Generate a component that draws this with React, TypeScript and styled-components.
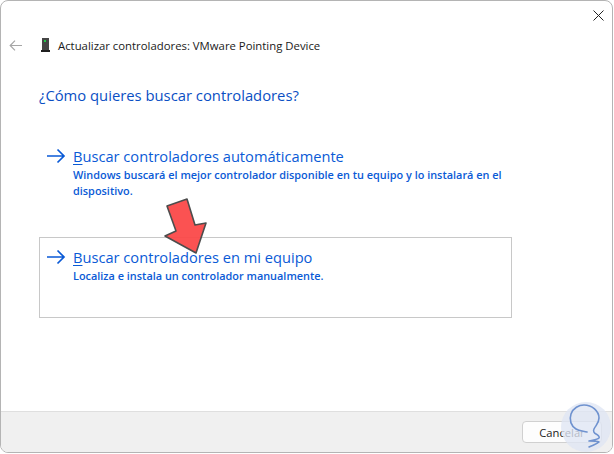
import styled, { createGlobalStyle } from 'styled-components';

const GlobalStyle = createGlobalStyle`
  html, body {
    margin: 0;
    padding: 0;
    background: #fff;
  }
  body {
    width: 614px;
    height: 454px;
    overflow: hidden;
    font-family: 'Open Sans', 'Noto Sans', sans-serif;
  }
`;

const Frame = styled.div`
  position: relative;
  width: 614px;
  height: 454px;
  overflow: hidden;
  background: #fff;
`;

const Dialog = styled.div`
  width: 613px;
  height: 453px;
  box-sizing: border-box;
  display: flex;
  flex-direction: column;
  border: 1px solid #b4b4b4;
  border-radius: 8px;
  overflow: hidden;
  background: #fff;
`;

const TitleBar = styled.div`
  height: 29px;
  display: flex;
  justify-content: flex-end;
  align-items: center;
  padding: 0 8px 0 0;
  box-sizing: border-box;
  flex: none;
`;

const Content = styled.div`
  flex: 1;
  display: flex;
  flex-direction: column;
  padding: 0 0 0 8px;
`;

const Header = styled.div`
  height: 30px;
  display: flex;
  align-items: center;
`;

const BackButton = styled.svg`
  flex: none;
  width: 13px;
  height: 11px;
`;

const DeviceGlyph = styled.svg`
  flex: none;
  width: 9px;
  height: 14px;
  margin-left: 19px;
`;

const HeaderTitle = styled.span`
  margin-left: 8px;
  font-size: 11.35px;
  color: #1a1a1a;
  white-space: nowrap;
`;

const Heading = styled.h1`
  margin: 25px 0 0 30px;
  font-size: 14.8px;
  line-height: 21px;
  font-weight: 400;
  color: #0a4fc4;
`;

const Options = styled.div`
  margin: 30px 0 0 30px;
  display: flex;
  flex-direction: column;
  gap: 38px;
`;

const Option = styled.div<{ $outlined?: boolean }>`
  width: 473px;
  height: ${(p) => (p.$outlined ? '81px' : '63px')};
  box-sizing: border-box;
  display: flex;
  align-items: flex-start;
  gap: 7px;
  padding: 9px 6px 0 6px;
  border: 1px solid ${(p) => (p.$outlined ? '#c8c8c8' : 'transparent')};
`;

const OptionArrow = styled.svg`
  flex: none;
  width: 20px;
  height: 16px;
  margin-top: 2px;
`;

const OptionBody = styled.div`
  display: flex;
  flex-direction: column;
  min-width: 0;
`;

const OptionTitle = styled.div`
  font-size: 14.65px;
  line-height: 20px;
  color: #0a5ad6;
  white-space: nowrap;

  u {
    text-underline-offset: 2px;
  }
`;

const OptionText = styled.div`
  margin-top: 1px;
  font-size: 10.9px;
  line-height: 16px;
  font-weight: 600;
  color: #0a5ad6;
`;

const Footer = styled.div`
  height: 41px;
  flex: none;
  box-sizing: border-box;
  display: flex;
  justify-content: flex-end;
  align-items: center;
  background: #f0f0f0;
  border-top: 1px solid #dfdfdf;
`;

const CancelButton = styled.button`
  width: 80px;
  height: 22px;
  margin-right: 10px;
  box-sizing: border-box;
  padding: 0;
  border: 1px solid #d0d0d0;
  border-radius: 4px;
  background: #fdfdfd;
  font-family: inherit;
  font-size: 11.2px;
  color: #1a1a1a;
`;

const Pointer = styled.svg`
  position: absolute;
  left: 160px;
  top: 195px;
`;

const Badge = styled.svg`
  position: absolute;
  left: 560px;
  top: 402px;
`;

const OptionIcon = () => (
  <OptionArrow viewBox="0 0 20 16" fill="none" stroke="#0a5ad6" strokeWidth="1.7">
    <path d="M1 8h17M11.500 1.500 18 8l-6.500 6.500" />
  </OptionArrow>
);

export default function App() {
  return (
    <Frame>
      <GlobalStyle />
      <Dialog>
        <TitleBar>
          <svg width="11" height="11" viewBox="0 0 11 11" stroke="#222" strokeWidth="1" fill="none">
            <path d="M.5.5l10 10M10.500.5l-10 10" />
          </svg>
        </TitleBar>
        <Content>
          <Header>
            <BackButton viewBox="0 0 13 11" fill="none" stroke="#a6a6a6" strokeWidth="1.2">
              <path d="M13 5.500H1.200M6 .7 1.200 5.500 6 10.300" />
            </BackButton>
            <DeviceGlyph viewBox="0 0 9 14">
              <rect x="1" y="0" width="7" height="12" fill="#454545" />
              <rect x="0" y="12" width="9" height="2" fill="#1f1f1f" />
              <rect x="3" y="2" width="2" height="2" fill="#22c74a" />
            </DeviceGlyph>
            <HeaderTitle>Actualizar controladores: VMware Pointing Device</HeaderTitle>
          </Header>
          <Heading>¿Cómo quieres buscar controladores?</Heading>
          <Options>
            <Option>
              <OptionIcon />
              <OptionBody>
                <OptionTitle><u>B</u>uscar controladores automáticamente</OptionTitle>
                <OptionText>
                  Windows buscará el mejor controlador disponible en tu equipo y lo instalará en el dispositivo.
                </OptionText>
              </OptionBody>
            </Option>
            <Option $outlined>
              <OptionIcon />
              <OptionBody>
                <OptionTitle><u>B</u>uscar controladores en mi equipo</OptionTitle>
                <OptionText>Localiza e instala un controlador manualmente.</OptionText>
              </OptionBody>
            </Option>
          </Options>
        </Content>
        <Footer>
          <CancelButton>Cancelar</CancelButton>
        </Footer>
      </Dialog>
      <Pointer width="50" height="62" viewBox="0 0 50 62">
        <path d="M7 11 27 4l8 26 11-2-10 30L5 41l11-5z" fill="#fb4747" fillOpacity="0.94" stroke="#4d4d4d" strokeWidth="1.6" strokeLinejoin="round" />
      </Pointer>
      <Badge width="54" height="52" viewBox="0 0 54 52">
        <circle cx="26" cy="25" r="25" fill="#dfe5f3" fillOpacity="0.78" />
        <path d="M27 30c-4-1-8-1-11-3-5-3-7-9-5-15 2-6 8-9 13-9 8 0 15 6 15 13 0 5-3 7-5 11-1 2 0 4 2 5 2 1 4 3 3 4-2 2-7 2-10 3 3 0 8 0 10 1-2 2-6 3-10 5" fill="none" stroke="#6f92cf" strokeWidth="1.6" strokeLinecap="round" strokeLinejoin="round" />
      </Badge>
    </Frame>
  );
}
